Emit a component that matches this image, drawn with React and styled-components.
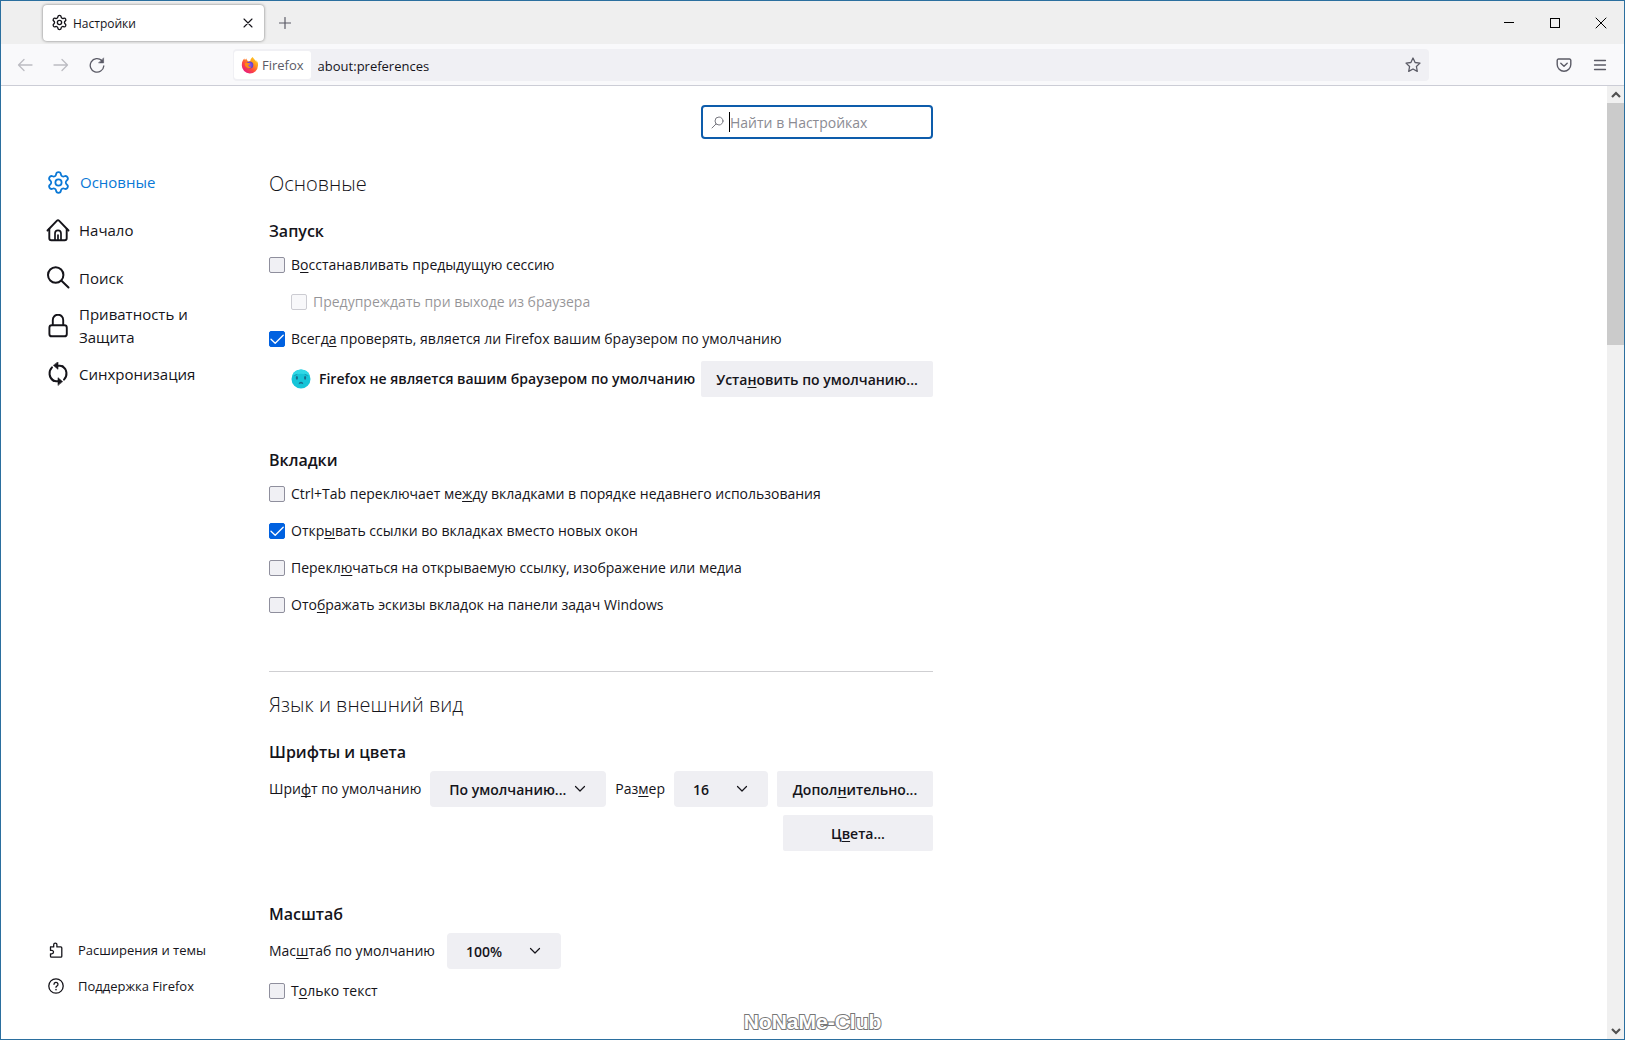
import React from 'react';
import styled, { createGlobalStyle } from 'styled-components';
import { Settings } from 'lucide-react';

const GlobalStyle = createGlobalStyle`
  *, *::before, *::after { box-sizing: border-box; }
  html, body { margin: 0; }
  body, button, input, select {
    font-family: 'Open Sans', 'Noto Sans', sans-serif;
    color: #15141a;
  }
  body { font-size: 14px; line-height: 20px; background: #fff; }
  svg { display: block; flex: none; }
  u { text-decoration: underline; text-underline-offset: 2px; text-decoration-thickness: 1px; text-decoration-skip-ink: none; }
`;

const Window = styled.div`
  height: 100vh;
  display: flex;
  flex-direction: column;
  overflow: hidden;
  border: 1px solid #2b6f9f;
  background: #fff;
`;

/* ---------- browser chrome ---------- */

const IconButton = styled.button`
  display: grid;
  place-items: center;
  width: ${(p) => p.$w || 36}px;
  height: 32px;
  padding: 0;
  border: 0;
  background: none;
  color: ${(p) => p.$color || '#5b5b66'};
`;

const TabStrip = styled.header`
  flex: none;
  display: flex;
  align-items: center;
  height: 43px;
  padding-left: 42px;
  background: #efefef;
`;

const Tab = styled.div`
  display: flex;
  align-items: center;
  width: 221px;
  height: 36px;
  padding: 0 0 0 8px;
  border-radius: 4px;
  background: #fff;
  box-shadow: 0 0 3px rgba(0, 0, 0, 0.5);
  font-size: 12px;
`;

const TabTitle = styled.span`
  flex: 1;
  margin-left: 5px;
  padding-top: 2px;
`;

const WindowButtons = styled.div`
  display: flex;
  margin-left: auto;
`;

const NavBar = styled.nav`
  flex: none;
  display: flex;
  align-items: center;
  height: 42px;
  padding: 0 6px;
  background: #f9f9fb;
  border-bottom: 1px solid #cccdd6;
`;

const UrlBar = styled.div`
  flex: 1;
  display: flex;
  align-items: center;
  height: 32px;
  margin: 0 117px 0 118px;
  padding-left: 1px;
  border-radius: 4px;
  background: #f0f0f4;
`;

const Identity = styled.button`
  display: flex;
  align-items: center;
  gap: 3px;
  height: 28px;
  padding: 0 7px;
  border: 0;
  border-radius: 3px;
  background: #fff;
  color: #5b5b66;
  font-size: 13px;
`;

const UrlInput = styled.input`
  flex: 1;
  min-width: 0;
  padding: 2px 7px 0;
  border: 0;
  outline: 0;
  background: none;
  font-size: 13px;
`;

/* ---------- page ---------- */

const Page = styled.div`
  flex: 1;
  display: flex;
  min-height: 0;
`;

const Sidebar = styled.aside`
  flex: none;
  display: flex;
  flex-direction: column;
  justify-content: space-between;
  width: 268px;
  padding: 72px 32px 35px 45px;
`;

const Category = styled.a`
  display: flex;
  align-items: center;
  gap: 9px;
  height: 48px;
  color: ${(p) => (p.$active ? '#0a78d6' : '#15141a')};
  font-size: 15px;
  line-height: 23px;
  text-decoration: none;
`;

const FooterLink = styled(Category)`
  gap: 14px;
  height: 36px;
  padding-left: 2px;
  font-size: 13px;
  line-height: 20px;
`;

const Main = styled.main`
  flex: 1;
  min-width: 0;
  overflow: hidden;
`;

const Pane = styled.div`
  display: flex;
  flex-direction: column;
  max-width: 664px;
  padding-top: 19px;
`;

const SearchBox = styled.label`
  align-self: flex-end;
  display: flex;
  align-items: center;
  width: 232px;
  height: 34px;
  padding-left: 8px;
  border: 2px solid #0d5cab;
  border-radius: 4px;
`;

const Caret = styled.span`
  width: 1px;
  height: 20px;
  margin-left: 5px;
  background: #000;
`;

const SearchInput = styled.input`
  flex: 1;
  min-width: 0;
  padding: 0;
  border: 0;
  outline: 0;
  background: none;
  font-size: 14px;
  &::placeholder { color: #8b8b93; opacity: 1; }
`;

const Title = styled.h1`
  margin: ${(p) => p.$top}px 0 20px;
  font-size: 20px;
  font-weight: 300;
  line-height: 30px;
`;

const Groups = styled.div`
  display: flex;
  flex-direction: column;
  gap: 48px;
`;

const Group = styled.section`
  display: flex;
  flex-direction: column;
`;

const Heading = styled.h2`
  margin: 0 0 3px;
  font-size: 16px;
  font-weight: 600;
  line-height: 24px;
`;

const Divider = styled.hr`
  width: 100%;
  margin: 48px 0 0;
  border: 0;
  border-top: 1px solid #cfcfd2;
`;

const CheckLabel = styled.label`
  display: flex;
  align-items: center;
  gap: 6px;
  height: 37px;
  padding-left: ${(p) => (p.$indent ? 22 : 0)}px;
  opacity: ${(p) => (p.$disabled ? 0.45 : 1)};
`;

const CheckBoxFrame = styled.span`
  display: grid;
  width: 16px;
  height: 16px;
  > * { grid-area: 1 / 1; }
`;

const CheckInput = styled.input`
  appearance: none;
  width: 16px;
  height: 16px;
  margin: 0;
  border: 1px solid #8f8f9d;
  border-radius: 2px;
  background: #f0f0f4;
  &:checked { border-color: #0061e0; background: #0061e0; }
`;

const ControlRow = styled.div`
  display: flex;
  align-items: center;
  gap: ${(p) => p.$gap || 9}px;
  padding: 4px 0 3px;
  padding-left: ${(p) => (p.$indent ? 22 : 0)}px;
`;

const FontGrid = styled(ControlRow)`
  align-items: flex-start;
`;

const ControlLabel = styled.label`
  line-height: 36px;
  white-space: nowrap;
`;

const ButtonStack = styled.div`
  flex: 1;
  display: flex;
  flex-direction: column;
  align-items: flex-end;
  gap: 8px;
`;

const Button = styled.button`
  flex: none;
  height: 36px;
  min-width: 150px;
  width: ${(p) => (p.$w ? `${p.$w}px` : 'auto')};
  margin-left: auto;
  padding: 0;
  border: 0;
  border-radius: 2px;
  background: #efeff3;
  font-size: 14px;
  font-weight: 600;
  white-space: nowrap;
`;

const Warning = styled.strong`
  display: flex;
  align-items: center;
  gap: 8px;
  font-size: 14px;
  font-weight: 600;
  white-space: nowrap;
`;

const SelectFrame = styled.span`
  flex: none;
  display: grid;
  align-items: center;
  width: ${(p) => p.$w}px;
  > * { grid-area: 1 / 1; }
  > svg { justify-self: end; margin-right: 20px; pointer-events: none; }
`;

const SelectInput = styled.select`
  appearance: none;
  width: 100%;
  height: 36px;
  padding: 0 0 0 19px;
  border: 0;
  border-radius: 4px;
  background: #efeff3;
  font-size: 14px;
  font-weight: 600;
`;

const ScrollBar = styled.div`
  flex: none;
  display: flex;
  flex-direction: column;
  width: 17px;
  background: #f0f0f0;
`;

const ScrollButton = styled.button`
  display: grid;
  place-items: center;
  height: 17px;
  padding: 0;
  border: 0;
  background: none;
  color: #505050;
`;

const Thumb = styled.div`
  flex: 242;
  background: #cbcbcb;
`;

const Track = styled.div`
  flex: 677;
`;

const Watermark = styled.div`
  position: absolute;
  left: 50%;
  bottom: 5px;
  transform: translateX(-50%);
  font-family: 'Liberation Sans', sans-serif;
  font-size: 21px;
  font-weight: 700;
  line-height: 26px;
  color: #fff;
  -webkit-text-stroke: 2px #777;
  paint-order: stroke fill;
`;

/* ---------- icons ---------- */

const Line = ({ w = 16, h = w, box = `0 0 ${w} ${h}`, sw = 1.2, children, ...rest }) => (
  <svg width={w} height={h} viewBox={box} fill="none" stroke="currentColor" strokeWidth={sw}
    strokeLinecap="round" strokeLinejoin="round" aria-hidden="true" {...rest}>
    {children}
  </svg>
);

const HomeIcon = () => (
  <Line w={24} sw={1.9}>
    <path d="M1.5 12.5 11 2.6a1.4 1.4 0 0 1 2 0l9.5 9.9" />
    <path d="M3.3 11v9.2a2 2 0 0 0 2 2h13.4a2 2 0 0 0 2-2V11" />
    <path d="M9 22v-6.6a3 3 0 0 1 6 0V22M12 17v5" strokeWidth="1.7" />
  </Line>
);

const SearchIcon = () => (
  <Line w={24} sw={2}>
    <circle cx="9.7" cy="9" r="7.7" />
    <path d="m15.5 14.7 7 6.8" />
  </Line>
);

const LockIcon = () => (
  <Line w={24} sw={1.9}>
    <rect x="3.4" y="11.3" width="17.4" height="11" rx="2.4" />
    <path d="M6.8 11V5.9a5.2 5.2 0 0 1 10.4 0V11" />
  </Line>
);

const SyncIcon = () => (
  <Line w={24} sw={2}>
    <path d="M7.4 18.7A8.7 8.7 0 0 1 6 5.4M16.6 4.3A8.7 8.7 0 0 1 18 17.6" />
    <path d="M11.5 3.7h2.3a8 8 0 0 1 2.8.8M12.500 19.300h-2.300a8 8 0 0 1-2.800-.8" />
    <path d="M12 0v7.300L7.600 3.600zM12 23.100v-7.400l4.400 3.700z" fill="currentColor" strokeWidth=".6" />
  </Line>
);

const PuzzleIcon = () => (
  <Line w={16} sw={1.3}>
    <path d="M2.7 4.9h3V2.7a1.6 1.6 0 0 1 3.2 0v2.2h3.9a1 1 0 0 1 1 1v8.300a1 1 0 0 1-1 1H3.500a1 1 0 0 1-1-1v-2.400h1.300a1.700 1.700 0 0 0 0-3.400H2.500V5" />
  </Line>
);

const HelpIcon = () => (
  <Line w={16} sw={1.3}>
    <circle cx="8" cy="8" r="7.2" />
    <path d="M6 6.300a2 2 0 1 1 2.900 1.800c-.600.300-.900.600-.900 1.200" />
    <path d="M8 11.500v.2" strokeWidth="1.500" />
  </Line>
);

const Chevron = () => (
  <Line w={12} sw={1.2}><path d="m1.500 3.500 4.500 4.500 4.500-4.500" /></Line>
);

const ScrollArrow = ({ down }) => (
  <Line w={10} sw={2.2} strokeLinecap="butt" strokeLinejoin="miter">
    <path d={down ? 'm1 3 4 4 4-4' : 'm1 7 4-4 4 4'} />
  </Line>
);

const FirefoxLogo = () => (
  <svg width="18" height="18" viewBox="0 0 18 18" aria-hidden="true">
    <defs>
      <linearGradient id="fxBody" x1="1" y1="0" x2=".2" y2="1">
        <stop offset="0" stopColor="#ffe226" />
        <stop offset=".35" stopColor="#ffa01e" />
        <stop offset=".65" stopColor="#ff4a3d" />
        <stop offset="1" stopColor="#e31587" />
      </linearGradient>
      <radialGradient id="fxGlobe">
        <stop offset="0" stopColor="#9059ff" />
        <stop offset="1" stopColor="#5b3fc4" />
      </radialGradient>
    </defs>
    <path fill="url(#fxBody)" d="M16.600 6.300c-.4-.9-1.100-1.800-1.700-2.200.5.900.7 1.700.8 2.400C14.700 4.100 13 3.100 11.700.900 9.900 1.900 9.400 3.700 9.300 4.900a4 4 0 0 0-2 .6C6.300 5 5.500 3.500 5.300 2.600c-.7.400-1 1-1.200 1.600C3.500 3.600 3.500 2.900 3.500 2.500 2 3.300.8 5.900.8 9.200a8.100 8.100 0 0 0 16.200.300c.1-1.200 0-2.200-.4-3.200z" />
    <circle cx="8.700" cy="9" r="3.600" fill="url(#fxGlobe)" />
    <path fill="#ff8a16" d="M3.800 7.200c1-.8 2.600-.7 3.500-.1 1 .1 1.900.2 1.900.7-.2.800-1.500.900-1.900 1.500.1 1.300 1.500 1.900 3.100 1.200-.6 1.500-2.300 2.200-3.800 1.600-1.900-.8-3.100-2.700-2.800-4.900z" />
  </svg>
);

const SadFace = () => (
  <svg width="20" height="20" viewBox="0 0 20 20" aria-hidden="true">
    <circle cx="10" cy="10" r="9.500" fill="#16c5d8" />
    <path d="M1 7a9.500 9.500 0 0 1 18 0c-3-3-15-3-18 0z" fill="#30d8e6" />
    <path d="M3.600 6.600 6 5.400M16.400 6.600 14 5.400" stroke="#1594ab" strokeWidth=".8" strokeLinecap="round" />
    <ellipse cx="5.900" cy="8.800" rx="1.100" ry="1.900" fill="#1b6d8c" />
    <ellipse cx="14.100" cy="8.800" rx="1.100" ry="1.900" fill="#1b6d8c" />
    <path d="M7.700 15.300c0-3.300 4.600-3.300 4.600 0-1.400-1.200-3.200-1.200-4.600 0z" fill="#1b6d8c" />
  </svg>
);

/* ---------- building blocks ---------- */

const Key = ({ text }) => {
  const [before, key, after] = text.split('_');
  return <span>{before}{key && <u>{key}</u>}{after}</span>;
};

const CheckRow = ({ text, checked, disabled, indent }) => (
  <CheckLabel $indent={indent} $disabled={disabled}>
    <CheckBoxFrame>
      <CheckInput type="checkbox" defaultChecked={checked} disabled={disabled} />
      {checked && (
        <Line w={16} sw={1.3} color="#fff" pointerEvents="none"><path d="m2 8.200 4.200 4 8-8" /></Line>
      )}
    </CheckBoxFrame>
    <Key text={text} />
  </CheckLabel>
);

const Select = ({ id, value, w }) => (
  <SelectFrame $w={w}>
    <SelectInput id={id} defaultValue={value}><option>{value}</option></SelectInput>
    <Chevron />
  </SelectFrame>
);

const categories = [
  ['Основные', <Settings size={25} strokeWidth={1.7} />],
  ['Начало', <HomeIcon />],
  ['Поиск', <SearchIcon />],
  ['Приватность и Защита', <LockIcon />],
  ['Синхронизация', <SyncIcon />],
];

export default function App() {
  return (
    <Window>
      <GlobalStyle />
      <TabStrip>
        <Tab>
          <Settings size={17} strokeWidth={1.9} />
          <TabTitle>Настройки</TabTitle>
          <IconButton $w={32} $color="#15141a" aria-label="Закрыть вкладку">
            <Line w={10} sw={1.1}><path d="m1 1 8 8M9 1 1 9" /></Line>
          </IconButton>
        </Tab>
        <IconButton $w={42} aria-label="Новая вкладка">
          <Line w={12} sw={1.2}><path d="M6 .5v11M.5 6h11" /></Line>
        </IconButton>
        <WindowButtons>
          <IconButton $w={46} $color="#000" aria-label="Свернуть">
            <Line w={10} sw={1} shapeRendering="crispEdges"><path d="M0 4.500h10" /></Line>
          </IconButton>
          <IconButton $w={46} $color="#000" aria-label="Развернуть">
            <Line w={10} sw={1} shapeRendering="crispEdges"><path d="M.5.500h9v9h-9z" /></Line>
          </IconButton>
          <IconButton $w={46} $color="#000" aria-label="Закрыть">
            <Line w={12} sw={1}><path d="m1 1 10 10M11 1 1 11" /></Line>
          </IconButton>
        </WindowButtons>
      </TabStrip>

      <NavBar>
        <IconButton $color="#bcbcc2" aria-label="Назад">
          <Line w={16} sw={1.3}><path d="M15 8H1.500M7 2.500 1.500 8 7 13.500" /></Line>
        </IconButton>
        <IconButton $color="#bcbcc2" aria-label="Вперёд">
          <Line w={16} sw={1.3}><path d="M1 8h13.500M9 2.500 14.500 8 9 13.500" /></Line>
        </IconButton>
        <IconButton aria-label="Обновить">
          <Line w={16} sw={1.3}>
            <path d="M14.800 9A6.800 6.800 0 1 1 12.800 3.500" />
            <path d="M14.600 1.200v4.700H9.900z" fill="currentColor" strokeWidth=".6" />
          </Line>
        </IconButton>
        <UrlBar>
          <Identity><FirefoxLogo />Firefox</Identity>
          <UrlInput aria-label="Адрес" defaultValue="about:preferences" />
          <IconButton $w={32} aria-label="Добавить в закладки">
            <Line w={16} sw={1.300}>
              <path d="m8 1 2.100 4.500 4.900.6-3.600 3.400.9 4.900L8 12l-4.300 2.400.9-4.900L1 6.100l4.900-.6z" />
            </Line>
          </IconButton>
        </UrlBar>
        <IconButton aria-label="Pocket">
          <Line w={16} sw={1.4}>
            <path d="M2.500 2h11a1.300 1.300 0 0 1 1.300 1.300v4.200a6.800 6.800 0 0 1-13.600 0V3.300A1.300 1.300 0 0 1 2.500 2z" />
            <path d="m4.800 6.200 3.200 3 3.200-3" />
          </Line>
        </IconButton>
        <IconButton aria-label="Меню">
          <Line w={14} sw={1.300}><path d="M1.500 2.500h11M1.500 7h11M1.500 11.500h11" /></Line>
        </IconButton>
      </NavBar>

      <Page>
        <Sidebar>
          <nav>
            {categories.map(([name, icon], i) => (
              <Category key={name} href="#" $active={i === 0}>{icon}<span>{name}</span></Category>
            ))}
          </nav>
          <div>
            <FooterLink href="#"><PuzzleIcon />Расширения и темы</FooterLink>
            <FooterLink href="#"><HelpIcon />Поддержка Firefox</FooterLink>
          </div>
        </Sidebar>

        <Main>
          <Pane>
            <SearchBox>
              <Line w={13} sw={1} color="#77777f"><circle cx="8" cy="5" r="4" /><path d="M5 8 1 12" /></Line>
              <Caret />
              <SearchInput aria-label="Найти в Настройках" placeholder="Найти в Настройках" />
            </SearchBox>

            <Title $top={30}>Основные</Title>
            <Groups>
              <Group>
                <Heading>Запуск</Heading>
                <CheckRow text="В_о_сстанавливать предыдущую сессию" />
                <CheckRow text="Предупреждать при выходе из браузера" disabled indent />
                <CheckRow text="Всегд_а_ проверять, является ли Firefox вашим браузером по умолчанию" checked />
                <ControlRow $indent $gap={4}>
                  <Warning><SadFace />Firefox не является вашим браузером по умолчанию</Warning>
                  <Button $w={232}><Key text="Уста_н_овить по умолчанию..." /></Button>
                </ControlRow>
              </Group>
              <Group>
                <Heading>Вкладки</Heading>
                <CheckRow text="Ctrl+Tab переключает ме_ж_ду вкладками в порядке недавнего использования" />
                <CheckRow text="Откр_ы_вать ссылки во вкладках вместо новых окон" checked />
                <CheckRow text="Перекл_ю_чаться на открываемую ссылку, изображение или медиа" />
                <CheckRow text="Ото_б_ражать эскизы вкладок на панели задач Windows" />
              </Group>
            </Groups>

            <Divider />
            <Title $top={18}>Язык и внешний вид</Title>
            <Groups>
              <Group>
                <Heading>Шрифты и цвета</Heading>
                <FontGrid>
                  <ControlLabel htmlFor="font"><Key text="Шри_ф_т по умолчанию" /></ControlLabel>
                  <Select id="font" value="По умолчанию..." w={176} />
                  <ControlLabel htmlFor="size"><Key text="Раз_м_ер" /></ControlLabel>
                  <Select id="size" value="16" w={94} />
                  <ButtonStack>
                    <Button $w={156}><Key text="Допол_н_ительно..." /></Button>
                    <Button><Key text="Ц_в_ета..." /></Button>
                  </ButtonStack>
                </FontGrid>
              </Group>
              <Group>
                <Heading>Масштаб</Heading>
                <ControlRow $gap={12}>
                  <ControlLabel htmlFor="zoom"><Key text="Мас_ш_таб по умолчанию" /></ControlLabel>
                  <Select id="zoom" value="100%" w={114} />
                </ControlRow>
                <CheckRow text="Т_о_лько текст" />
              </Group>
            </Groups>
          </Pane>
        </Main>

        <ScrollBar>
          <ScrollButton aria-label="Прокрутить вверх"><ScrollArrow /></ScrollButton>
          <Thumb />
          <Track />
          <ScrollButton aria-label="Прокрутить вниз"><ScrollArrow down /></ScrollButton>
        </ScrollBar>
      </Page>
      <Watermark>NoNaMe-Club</Watermark>
    </Window>
  );
}
